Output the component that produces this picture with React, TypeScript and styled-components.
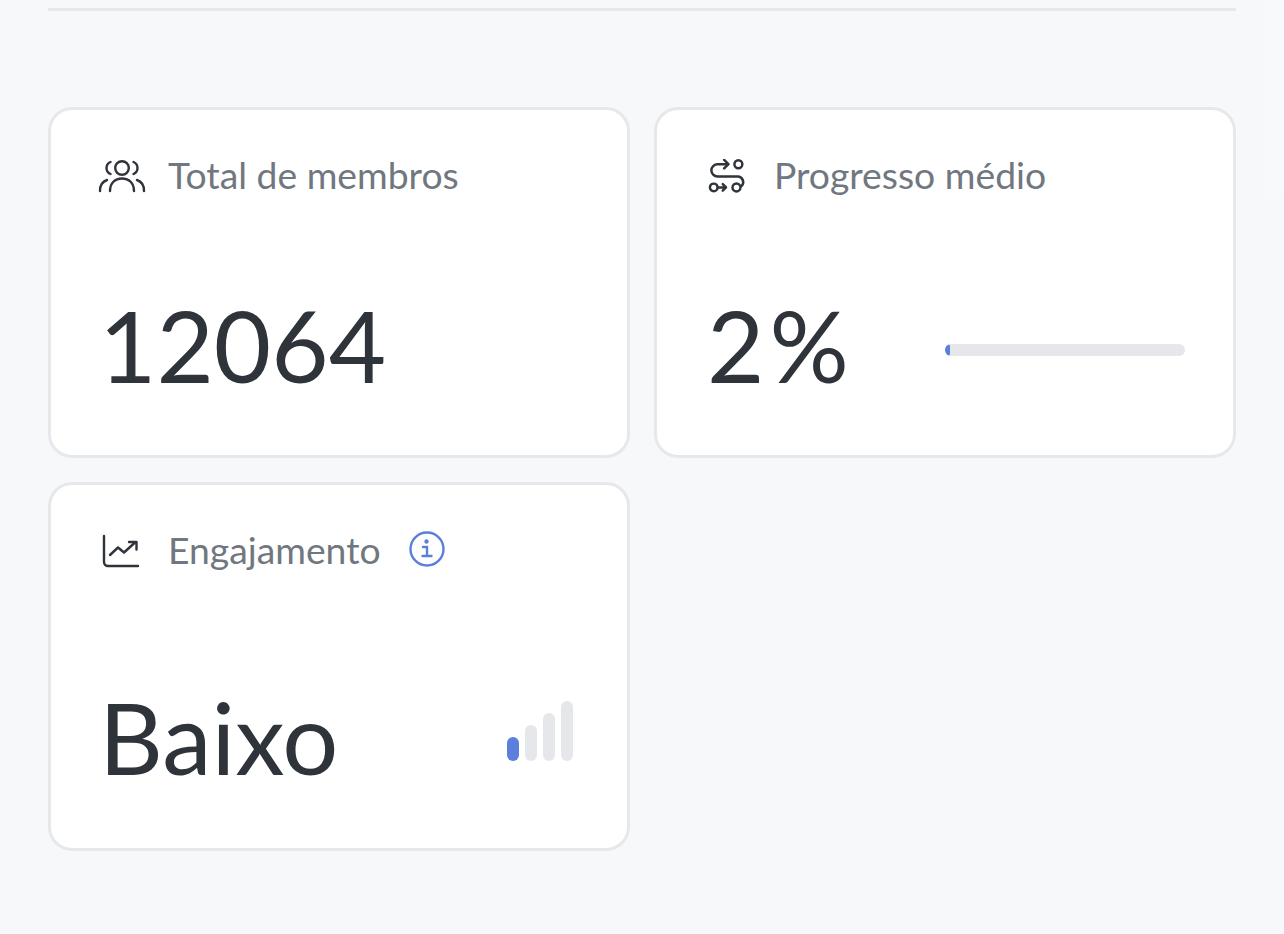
import React from 'react';
import styled, { createGlobalStyle } from 'styled-components';

const GlobalStyle = createGlobalStyle`
  html, body {
    margin: 0;
    height: 100%;
    overflow: hidden;
    background: #f7f8fa;
    font-family: 'Lato', 'Noto Sans', sans-serif;
  }
`;

const Page = styled.div`
  position: relative;
  box-sizing: border-box;
  height: 934px;
  padding: 8px 48px 0;
`;

const Divider = styled.hr`
  margin: 0 0 96px;
  height: 3px;
  border: 0;
  background: #e6e8ec;
`;

const ScrollTrack = styled.div`
  position: absolute;
  top: 0;
  right: 0;
  width: 19px;
  height: 198px;
  background: #f8f9fa;
`;

const Grid = styled.div`
  display: grid;
  grid-template-columns: 582px 582px;
  grid-template-rows: 351px 369px;
  gap: 24px;
`;

const Card = styled.section`
  box-sizing: border-box;
  display: flex;
  flex-direction: column;
  background: #fff;
  border: 3px solid #e6e8ec;
  border-radius: 24px;
  padding: 45px 48px 0;
`;

const Header = styled.header`
  display: flex;
  align-items: center;
  height: 44px;
  color: #2f343b;
`;

const IconSlot = styled.span<{ $offset: number }>`
  display: flex;
  width: 48px;
  margin-left: ${(p) => p.$offset}px;
  margin-right: ${(p) => 21 - p.$offset}px;
  justify-content: center;
`;

const Title = styled.h3<{ $nudge?: number }>`
  margin: -6px 0 0 ${(p) => p.$nudge ?? 0}px;
  font-size: 37.3px;
  font-weight: 400;
  color: #71777f;
`;

const InfoIcon = styled.svg`
  margin: -6px 0 0 27px;
  color: #5b7fdb;
`;

const Body = styled.div<{ $top: number }>`
  display: flex;
  align-items: center;
  justify-content: space-between;
  margin-top: ${(p) => p.$top}px;
`;

const Value = styled.span<{ $tracking?: number; $indent?: number }>`
  margin-left: ${(p) => p.$indent ?? 0}px;
  padding-bottom: 10px;
  font-size: 99px;
  line-height: 110px;
  letter-spacing: ${(p) => p.$tracking ?? 0}px;
  color: #2f343b;
`;

const Track = styled.div`
  width: 240px;
  height: 12px;
  border-radius: 6px;
  background: #e5e7eb;
  overflow: hidden;
`;

const Fill = styled.div`
  height: 100%;
  border-radius: 6px;
  background: #5b7fdb;
`;

const Signal = styled.div`
  display: flex;
  align-items: flex-end;
  gap: 6px;
  height: 60px;
  margin: 0 6px 22px 0;
`;

const SignalBar = styled.span<{ $active?: boolean }>`
  width: 12px;
  border-radius: 6px;
  background: ${(p) => (p.$active ? '#5b7fdb' : '#e5e7eb')};
`;

const UsersIcon = () => (
  <svg width="48" height="36" viewBox="0 0 48 36" fill="none" stroke="currentColor" strokeWidth="2.4" strokeLinecap="round">
    <circle cx="24" cy="9" r="6.8" />
    <path d="M12 32c0-8 5-12.500 12-12.500S36 24 36 32" />
    <path d="M12.500 3a6.500 6.500 0 0 0 0 12" />
    <path d="M35.500 3a6.500 6.500 0 0 1 0 12" />
    <path d="M2 32c0-6 2.500-9.500 7-11" />
    <path d="M46 32c0-6-2.500-9.500-7-11" />
  </svg>
);

const RouteIcon = () => (
  <svg width="38" height="36" viewBox="0 0 40 38" fill="none" stroke="currentColor" strokeWidth="2.6" strokeLinecap="round" strokeLinejoin="round">
    <circle cx="32" cy="5.500" r="4.200" />
    <circle cx="30" cy="30" r="4.200" />
    <circle cx="6" cy="30" r="4" />
    <path d="M21 5.500H10a6.500 6.500 0 0 0 0 13h22a6 6 0 0 1 3.500 10" />
    <path d="M17 1l4.500 4.500L17 10" />
    <path d="M11 30h7.500M15.500 26.500l3.500 3.500-3.500 3.500" />
  </svg>
);

const ChartIcon = () => (
  <svg width="38" height="36" viewBox="0 0 38 36" fill="none" stroke="currentColor" strokeWidth="2.4" strokeLinecap="round" strokeLinejoin="round">
    <path d="M2 2v26a4 4 0 0 0 4 4h30" />
    <path d="M8 21l8-7.500 6 5 11-10" />
    <path d="M27 8h7.500v7.500" />
  </svg>
);

const App: React.FC = () => {
  const percentage = 2;
  const levels = [24, 36, 48, 60];

  return (
    <Page>
      <GlobalStyle />
      <ScrollTrack />
      <Divider />
      <Grid>
        <Card>
          <Header>
            <IconSlot $offset={-1}><UsersIcon /></IconSlot>
            <Title>Total de membros</Title>
          </Header>
          <Body $top={91}>
            <Value>12064</Value>
          </Body>
        </Card>
        <Card>
          <Header>
            <IconSlot $offset={-2}><RouteIcon /></IconSlot>
            <Title>Progresso médio</Title>
          </Header>
          <Body $top={91}>
            <Value $tracking={5} $indent={2}>2%</Value>
            <Track>
              <Fill style={{ width: `${percentage}%` }} />
            </Track>
          </Body>
        </Card>
        <Card>
          <Header>
            <IconSlot $offset={-2}><ChartIcon /></IconSlot>
            <Title>Engajamento</Title>
            <InfoIcon width="38" height="38" viewBox="0 0 38 38" fill="none" stroke="currentColor" strokeWidth="2.4" strokeLinecap="round">
              <circle cx="19" cy="19" r="16.500" />
              <path d="M15 17h4v9M14.500 26h9" />
              <circle cx="18.500" cy="11.500" r="1" fill="currentColor" />
            </InfoIcon>
          </Header>
          <Body $top={108}>
            <Value>Baixo</Value>
            <Signal>
              {levels.map((h, i) => (
                <SignalBar key={h} $active={i === 0} style={{ height: h }} />
              ))}
            </Signal>
          </Body>
        </Card>
      </Grid>
    </Page>
  );
};

export default App;
